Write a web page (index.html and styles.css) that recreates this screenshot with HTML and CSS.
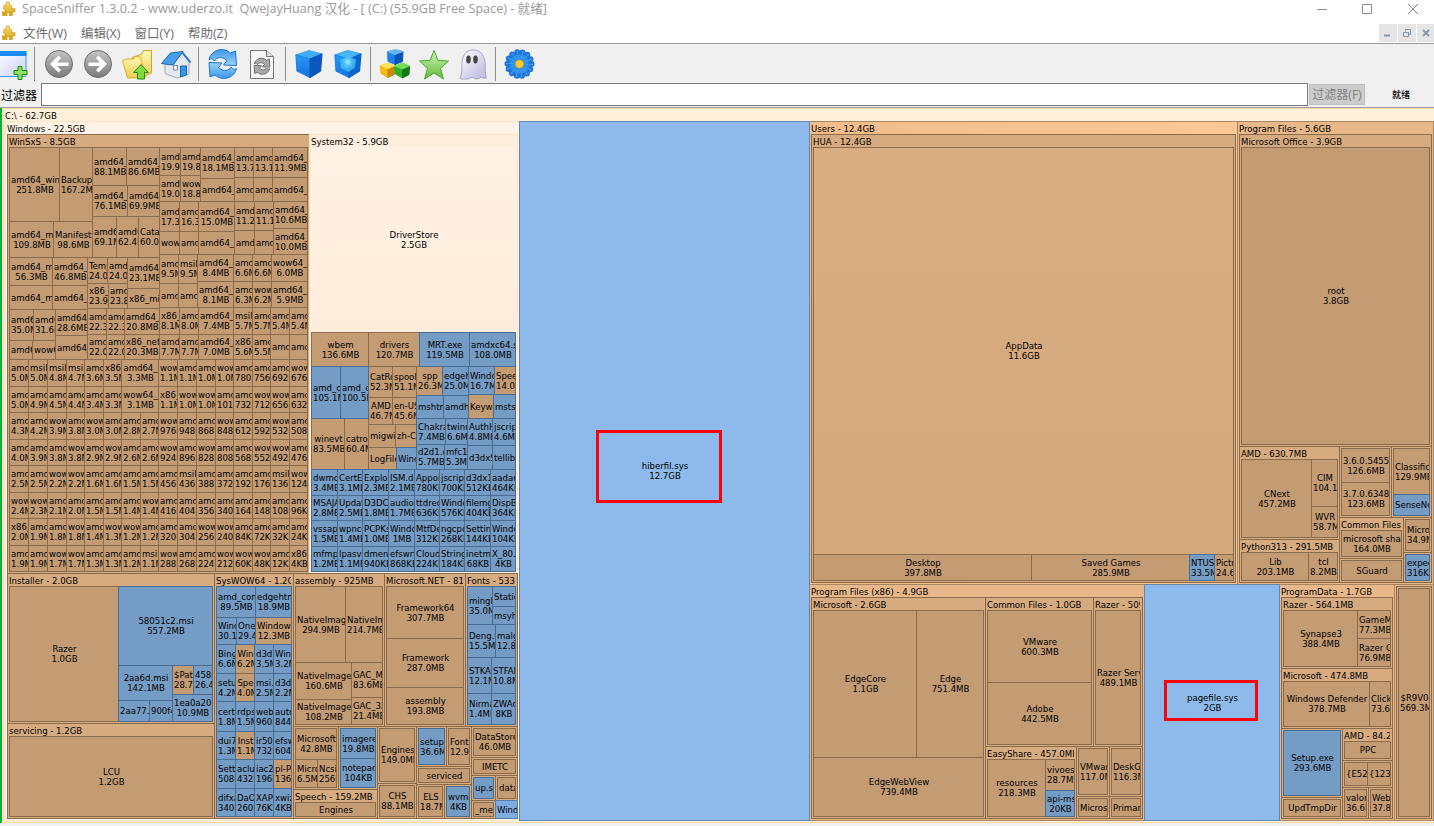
FILE: index.html
```html
<!DOCTYPE html>
<html lang="zh-CN">
<head>
<meta charset="utf-8">
<title>SpaceSniffer</title>
<link rel="stylesheet" href="styles.css">
</head>
<body>
<svg class="defs" width="0" height="0" aria-hidden="true">
  <defs>
    <linearGradient id="gGold" x1="0" y1="0" x2="0" y2="1"><stop offset="0" stop-color="#fdeb7c"/><stop offset="1" stop-color="#d59a0c"/></linearGradient>
    <linearGradient id="gGray" x1="0" y1="0" x2="0" y2="1"><stop offset="0" stop-color="#c4c4c4"/><stop offset="1" stop-color="#7b7b7b"/></linearGradient>
    <linearGradient id="gFold" x1="0" y1="0" x2="0" y2="1"><stop offset="0" stop-color="#fff8b4"/><stop offset="1" stop-color="#f1cd4e"/></linearGradient>
    <linearGradient id="gBlue" x1="0" y1="0" x2="0" y2="1"><stop offset="0" stop-color="#3d97ea"/><stop offset="1" stop-color="#9cd3fb"/></linearGradient>
    <linearGradient id="gCube" x1="0" y1="0" x2="0" y2="1"><stop offset="0" stop-color="#2b98f5"/><stop offset="1" stop-color="#0f70dc"/></linearGradient>
    <linearGradient id="gGreen" x1="0" y1="0" x2="0" y2="1"><stop offset="0" stop-color="#d2f3bc"/><stop offset="1" stop-color="#62bc35"/></linearGradient>
    <linearGradient id="gGhost" x1="0" y1="0" x2="1" y2="1"><stop offset="0" stop-color="#ffffff"/><stop offset="1" stop-color="#b9b4dd"/></linearGradient>
    <linearGradient id="gWin" x1="0" y1="0" x2="1" y2="1"><stop offset="0" stop-color="#ffffff"/><stop offset="1" stop-color="#ccd2f4"/></linearGradient>
    <radialGradient id="gGlow"><stop offset="0" stop-color="#a8f4ff"/><stop offset="1" stop-color="#38b4f8" stop-opacity="0"/></radialGradient>
    <g id="puzzle"><path d="M2.500 4.500H4.800C4 2.200 5 .8 6.400.8s2.200 1.500 1.500 3.700H10v2.700h3v3h-2.500v3.300H7.800c.5-1.700 0-2.800-1-2.800s-1.700 1-1.100 2.800H1.500V10c1.400.4 2.500-.1 2.500-1.200S3.500 7.200 2.500 7.400Z" fill="url(#gGold)" stroke="#c9920f" stroke-width=".7"/></g>
    <path id="swirl" d="M-13.500-4C-12-12-1-18 8-10.500L13-12.500 14 2 1 1.500 4.500-3C-1-8-6-6-8-2.500-10-5-11-5-13.500-4Z"/>
  </defs>
</svg>
<div class="app">
  <header class="titlebar">
    <svg class="logo" viewBox="0 0 14 14"><use href="#puzzle"/></svg>
    <span class="caption">SpaceSniffer 1.3.0.2 - www.uderzo.it&nbsp; QwejayHuang 汉化 - [ (C:) (55.9GB Free Space) - 就绪]</span>
    <svg class="winctl" viewBox="0 0 104 12" fill="none" stroke="#8a8a8a"><path d="M0 7.500H10M45.500 2.500h9v9h-9zM91 2l10 10M101 2 91 12"/></svg>
  </header>
  <nav class="menubar">
    <svg class="logo" viewBox="0 0 14 14"><use href="#puzzle"/></svg>
    <span>文件(W)</span><span>编辑(X)</span><span>窗口(Y)</span><span>帮助(Z)</span>
    <div class="mdi">
      <i><svg viewBox="0 0 18 18"><path d="M5 11.500h6" stroke="#8798ac" stroke-width="2"/></svg></i>
      <i><svg viewBox="0 0 18 18" fill="none" stroke="#8798ac"><path d="M7.500 7.500V5.500h5v5h-2M7 5.500h6M5.500 8.500h5v4h-5zM5 8.500h6"/></svg></i>
      <i><svg viewBox="0 0 18 18"><path d="m6 6 6 6m0-6-6 6" stroke="#8798ac" stroke-width="2"/></svg></i>
    </div>
  </nav>
  <div class="toolbar">
    <svg class="tools" viewBox="0 0 545 38">
      <rect x="-4" y="6.500" width="30" height="25" rx="1" fill="url(#gWin)" stroke="#3a96e6"/><path d="M-4 6h30.500v5H-4z" fill="#1c8cf0"/>
      <path d="M18 21.500h4v4h5v4h-5v5h-4v-5h-4v-4h4z" fill="#8fe05a" stroke="#198a14"/>
      <path d="M34.500 2v34M198.500 2v34M285.500 2v34M370.500 2v34M495.500 2v34" stroke="#8d8d8d"/>
      <g stroke="#6c6c6c"><circle cx="59" cy="19" r="13.500" fill="url(#gGray)"/><circle cx="98" cy="19" r="13.500" fill="url(#gGray)"/></g>
      <path d="m50 19 8.500-8.500 2.500 2.500-4 4.500h11.500v3.500H57l4 4-2.500 2.500zM107 19l-8.500-8.500L96 13l4 4.500H88.500V21H100l-4 4 2.500 2.500z" fill="#fff"/>
      <path d="M132 12.500 142 9l1.500-3.500h8V28l-13 5z" fill="url(#gFold)" stroke="#d2a21c"/>
      <path d="m122.500 15.500 4-1.500h7l2-2.500 5 .5 5 20.500-18 .5z" fill="url(#gFold)" stroke="#d9ae2c" stroke-linejoin="round"/>
      <path d="m141 19.500 7.500 8h-4v6.500h-7v-6.500h-4z" fill="#7edb3d" stroke="#278a15"/>
      <path d="M165 19v9.500l12 4.500 12-4V17l-7-9-9 11z" fill="#e4e9f0" stroke="#9fa9b5"/>
      <path d="m161.500 18.500 9-10.500L183 6.500 173 20z" fill="#4a9de8" stroke="#1b66b0" stroke-linejoin="round"/>
      <path d="m182.500 7.500 8 10" stroke="#2a79c8" stroke-width="2"/>
      <path d="M180.500 21h6v9l-6 2z" fill="#3a93e6" stroke="#1b66b0"/><path d="M173.500 20.500h4v4.500h-4z" fill="#fff" stroke="#75879a"/>
      <g fill="url(#gBlue)" stroke="#1e74cc" stroke-linejoin="round"><use href="#swirl" transform="translate(222.500 18.500)"/><use href="#swirl" transform="translate(223 19.500) rotate(180)"/></g>
      <path d="M250.500 5.500h16l7 6v22h-23z" fill="#f5f5f5" stroke="#777"/><path d="M266.500 5.500v6h7" fill="#ddd" stroke="#777"/>
      <g fill="#aaa" stroke="#666" stroke-width="1.600" stroke-linejoin="round"><use href="#swirl" transform="translate(262 21) scale(.56)"/><use href="#swirl" transform="translate(262 21.500) rotate(180) scale(.56)"/></g>
      <g stroke-width="1.200" stroke-linejoin="round"><path d="m296 10 13-4.500 13 3.500-12 5z" fill="#45acf9" stroke="#45acf9"/><path d="m296 10 14 4v18.500L297 26z" fill="url(#gCube)" stroke="#1a86ea"/><path d="m310 14 12-5-1.500 17-10.500 6.500z" fill="#0a58bd" stroke="#0a58bd"/></g>
      <g transform="translate(39 0)" stroke-width="1.200" stroke-linejoin="round"><path d="m296 10 13-4.500 13 3.500-12 5z" fill="#45b8f9" stroke="#3aa4f0"/><path d="m296 10 14 4v18.500L297 26z" fill="url(#gCube)" stroke="#1a86ea"/><path d="m310 14 12-5-1.500 17-10.500 6.500z" fill="#0a66cd" stroke="#0a60c8"/><path d="m301 15 8-3 8 2.500-1 8.500-6.500 4-7.500-4z" fill="#3fc4fa" opacity=".7" stroke="none"/><circle cx="309" cy="17" r="8" fill="url(#gGlow)" stroke="none"/></g>
      <g stroke-linejoin="round">
      <path d="m387.500 6.500 7.500 3v10l-7-3z" fill="#1f82ec" stroke="#1f82ec"/><path d="m395 9.500 8-3-.5 10-7.500 3z" fill="#0b53b4" stroke="#0b53b4"/><path d="m387.500 6.500 8-2 7.500 2-8 3z" fill="#63b4f5" stroke="#63b4f5"/>
      <path d="m380.500 20.500 7.500 3v9l-7-4z" fill="#f6bd14" stroke="#f0b30c"/><path d="m388 23.500 7-3V29l-7 3.500z" fill="#c98a02" stroke="#c98a02"/><path d="m380.500 20.500 7.500-2.500 7 2.500-7 3z" fill="#ffe45a" stroke="#ffe04a"/>
      <path d="m394.500 21 8 3v9l-7-4z" fill="#2fae28" stroke="#2fae28"/><path d="m402.500 24 7-3-.5 8.500-6.500 3.500z" fill="#0f7a12" stroke="#0f7a12"/><path d="m394.500 21 8-3 7 3-7 3z" fill="#74e05a" stroke="#6cd652"/>
      <path d="m434 5.500 4 10 10.500.5-8 7.500 3 10.500-9.500-6-9.500 6 3-10.500-8-7.500 10.500-.5z" fill="url(#gGreen)" stroke="#4ea52d"/></g>
      <path d="M460 33.500c2.500-5 1.500-11 2-16C462.500 9 467 5 473 5c7 0 11 4 12 12 .6 5-.5 11 1.500 16-2 1-3.500-.5-5-.5s-3 1.500-5 1.500-3-1.500-4.500-1.500-3 1.500-5 1.500-5 .5-7-.5z" fill="url(#gGhost)" stroke="#aaa5cf"/><ellipse cx="468.500" cy="14.500" rx="2.300" ry="4" fill="#444"/><ellipse cx="475.500" cy="14.500" rx="2.300" ry="4" fill="#444"/>
      <circle cx="519.500" cy="19" r="12" fill="#2f8fee" stroke="#1d78da" stroke-width="6" stroke-linecap="round" stroke-dasharray="0 5.385"/><circle cx="519.500" cy="19" r="9.500" fill="none" stroke="#5aaaf6" stroke-width="8" stroke-dasharray=".6 3.663"/><circle cx="519.500" cy="19" r="4" fill="#ffd22a" stroke="#e8a210" stroke-width=".8"/>
    </svg>
  </div>
  <div class="filter">
    <label>过滤器</label><div class="field"></div><button disabled>过滤器(F)</button><span>就绪</span>
  </div>
  <main class="canvas"></main>
</div>
<div class="mark mark-hiber"></div>
<div class="mark mark-page"></div>
<script src="treemap.js"></script>
</body>
</html>
```
FILE: styles.css
```css
* { box-sizing: border-box; }
body { margin: 0; width: 1434px; height: 826px; overflow: hidden; background: #f0f0f0; }
.defs { position: absolute; }
.app { display: flex; flex-direction: column; height: 826px; font-family: "Noto Sans", "Noto Sans CJK SC", sans-serif; }
.titlebar { display: flex; align-items: center; flex: 0 0 21px; background: #fff; padding: 0 13px 5px 1px; }
.logo { width: 15px; height: 15px; flex: none; }
.caption { margin-left: 6px; font: 12.64px "Open Sans", "Noto Sans CJK SC", sans-serif; line-height: 16px; color: #999; white-space: pre; }
.winctl { width: 104px; height: 12px; margin-left: auto; }
.menubar { display: flex; align-items: center; flex: 0 0 22px; background: #fff; padding-left: 1px; font: 12.500px "Open Sans", "Noto Sans CJK SC", sans-serif; color: #6b6b6b; }
.menubar span { margin-left: 7px; margin-right: 7px; white-space: nowrap; }
.mdi { display: flex; gap: 1px; margin-left: auto; padding-top: 2px; }
.mdi i { width: 18px; height: 18px; background: #e5e5e5; }
.mdi i:last-child { width: 17px; overflow: hidden; }
.mdi svg { display: block; width: 18px; height: 18px; }
.toolbar { flex: 0 0 40px; background: #f0f0f0; border-top: 1px solid #999; padding-top: 1px; }
.tools { display: block; width: 545px; height: 38px; }
.filter { display: flex; flex: 0 0 25px; align-items: flex-start; border-bottom: 1px solid #a0a0a0; font: 12px "Noto Sans CJK SC", sans-serif; }
.filter label { width: 41px; padding-left: 1px; line-height: 23px; color: #000; white-space: nowrap; }
.field { width: 1267px; height: 23px; background: #fff; border: 1px solid #7a7a7a; }
.filter button { width: 56px; height: 21px; margin: 1px 0 0 1px; padding: 0; border: 1px solid #bfbfbf; background: #ccc; color: #838383; font: 12px/18px "Open Sans", "Noto Sans CJK SC", sans-serif; white-space: nowrap; }
.filter span { margin-left: 27px; font-size: 9px; line-height: 23px; font-weight: 500; }
.canvas { display: flex; flex: 0 0 715px; width: 1434px; padding-left: 1px; border-left: 2px solid #0cb236; overflow: hidden; }

.row, .col { display: flex; flex: 1 1 0; min-width: 0; min-height: 0; }
.col { flex-direction: column; }
.leaf, .folder { min-width: 0; min-height: 0; margin: 0 -1px -1px 0; border: 1px solid #8a6b4c; flex: 1 1 0; }
.row.sized, .col.sized { flex: 0 0 calc(var(--s) * 1px); }
.leaf.sized, .folder.sized { flex: 0 0 calc(var(--s) * 1px + 1px); }
.leaf { display: flex; flex-direction: column; justify-content: center; padding: 0 0 0 1px; overflow: hidden; background: #c49c74; font: 9.500px/10px "DejaVu Sans Condensed", "DejaVu Sans", sans-serif; color: #000; }
.leaf span { display: block; flex: none; overflow: hidden; white-space: nowrap; text-align: center; height: 10px; }
.file { background: #759cc5; border-color: #4c6d92; position: relative; }
.bright { background: #8dbaea; border-color: #6187b0; }
.near { background: #7eace0; border-color: #5a80ad; }
.lit { background: linear-gradient(#fff2e4, #feecdb); border-color: #fff3e6; }
.wide { background: linear-gradient(#d8ad82, #d3a87c); }
.folder { display: flex; flex-direction: column; padding: 0 2px 2px 1px; background: #d6ab7f; }
.folder > h6 { flex: 0 0 12px; margin: 0; overflow: hidden; white-space: nowrap; font: 9.500px/13px "DejaVu Sans Condensed", "DejaVu Sans", sans-serif; color: #000; }
.folder.bare { padding-top: 1px; }
.canvas > .root { flex: 0 0 1433px; margin: 0; background: #fff0dc; border-color: #ffd9a4; }
.glow { background: #fff3e6; border-color: #fde4c6; }
.glow2 { background: #feeedd; border-color: #fde4c6; }
.top { background: #e8b88a; border-color: #a98560; }
.warm { background: linear-gradient(90deg, #f0bd8b, #fbc795); }

.mark { position: absolute; border: 3px solid #f80308; }
.mark-hiber { left: 596px; top: 430px; width: 126px; height: 73px; }
.mark-page { left: 1164px; top: 680px; width: 94px; height: 41px; }
```
FILE: treemap.js
```js
// Node builders. Stops are the border positions of a split; each size is the gap between two stops.
const el = (cls, kids = []) => {
  const n = document.createElement('div');
  n.className = cls;
  kids.forEach(k => n.append(k));
  return n;
};
const split = (dir, stops, kids) => {
  kids.forEach((k, i) => {
    if (i < kids.length - 1) {
      k.classList.add('sized');
      k.style.setProperty('--s', stops[i + 1] - stops[i]);
    }
  });
  return el(dir, kids);
};
const R = (stops, ...kids) => split('row', stops, kids);
const C = (stops, ...kids) => split('col', stops, kids);
// "name|size"; a leading "*" marks a file, otherwise a folder
const L = (s, cls = '') => {
  const file = s[0] === '*';
  const n = el('leaf ' + (file ? 'file ' : '') + cls);
  s.replace(/^\*/, '').split('|').forEach(t => {
    const e = document.createElement('span');
    e.textContent = t;
    n.append(e);
  });
  return n;
};
const F = (title, kid, cls = '') => {
  const n = el('folder ' + cls);
  const h = document.createElement('h6');
  h.textContent = title;
  n.append(h, kid);
  return n;
};
const U = (kid, cls = '') => el('folder bare ' + cls, [kid]);
const short = { a: 'amd64_', w: 'wow64_', x: 'x86_', m: 'msil_' };
// space separated leaves; "a5.0MB" expands to amd64_ / 5.0MB
const W = s => s.trim().split(/\s+/).map(t => {
  const m = /^([awxm])([\d.]+[KM]B)?$/.exec(t);
  return L(m ? short[m[1]] + (m[2] ? '|' + m[2] : '') : t.replace(/~/g, ' '));
});
const row = (stops, s) => R(stops, ...W(s));
const col = (stops, s) => C(stops, ...W(s));

const sxsTopLeft = R([9, 92, 159],
  C([147, 221, 257], row([9, 59, 92], 'amd64_win|251.8MB Backup|167.2MB'), row([9, 53, 92], 'amd64_m|109.8MB Manifests|98.6MB')),
  C([147, 185, 216, 257], row([92, 126, 159], 'a88.1MB a86.6MB'), row([92, 127, 159], 'a76.1MB a69.9MB'), row([92, 116, 138, 159], 'a69.1MB a62.4MB Catalogs|60.0MB')));
const sxsMidLeft = R([9, 87, 159],
  C([257, 285, 309, 359],
    row([9, 52, 87], 'amd64_m|56.3MB a46.8MB'),
    row([9, 52, 87], 'amd64_m a'),
    R([9, 55, 87],
      C([309, 340, 359], row([9, 33, 55], 'a35.0MB a31.6MB'), row([9, 32, 55], 'a w')),
      col([309, 335, 359], 'a28.6MB a'))),
  C([257, 308, 334, 359],
    R([87, 127, 159],
      C([257, 283, 308], row([87, 107, 127], 'Temp|24.0MB a24.0MB'), row([87, 108, 127], 'x23.9MB a23.8MB')),
      col([257, 288, 308], 'a23.1MB x86_mi')),
    row([87, 106, 124, 159], 'a22.3MB a22.3MB a20.8MB'),
    row([87, 106, 124, 159], 'a22.0MB a22.0MB x86_net|20.3MB')));
const sxsRight = C([147, 201, 254, 307, 359],
  R([159, 200, 234, 307],
    C([147, 175, 201], row([159, 180, 200], 'a19.9MB a19.8MB'), row([159, 180, 200], 'a19.0MB w18.8MB')),
    col([147, 178, 201], 'a18.1MB a'),
    C([147, 177, 201], row([234, 253, 272, 307], 'a13.7MB a13.1MB a11.9MB'), row([234, 253, 272, 307], 'a a a'))),
  R([159, 234, 273, 307],
    C([201, 231, 254], row([159, 179, 198, 234], 'a17.3MB a16.3MB a15.0MB'), row([159, 179, 198, 234], 'w a a')),
    C([201, 230, 254], row([234, 254, 273], 'a11.2MB a11.1MB'), row([234, 254, 273], 'a a')),
    col([201, 228, 254], 'a10.6MB a10.0MB')),
  R([159, 197, 233, 271, 307],
    C([254, 283, 307], row([159, 178, 197], 'a9.5MB m9.5MB'), row([159, 178, 197], 'a a')),
    col([254, 281, 307], 'a8.4MB a8.1MB'),
    C([254, 281, 307], row([233, 252, 271], 'a6.6MB a6.6MB'), row([233, 252, 271], 'a6.3MB w6.2MB')),
    col([254, 281, 307], 'w6.0MB a5.9MB')),
  C([307, 334, 359],
    row([159, 179, 198, 233, 252, 270, 289, 307], 'x8.1MB a8.0MB a7.4MB m5.7MB a5.7MB a5.4MB a5.4MB'),
    row([159, 179, 198, 233, 252, 270, 289, 307], 'a7.7MB a7.7MB a7.0MB x5.6MB a5.5MB a a')));
const c16 = [9, 28, 47, 66, 84, 103, 121, 140, 158, 177, 196, 215, 233, 252, 270, 289, 307];
const c15 = c16.filter(v => v !== 140);
const winsxs = C([147, 359, 386, 412, 439, 465, 492, 518, 545, 571],
  R([9, 159, 307], C([147, 257, 359], sxsTopLeft, sxsMidLeft), sxsRight),
  row(c15, 'a5.0MB m5.0MB m4.8MB m4.7MB a3.6MB x3.5MB a3.3MB w1.1MB a1.1MB a1.0MB w1.0MB a780KB a756KB a692KB w676KB'),
  row(c15, 'a5.0MB a4.9MB a4.5MB a4.4MB a3.4MB a3.3MB w3.1MB x1.1MB w1.0MB w1.0MB a1016KB a732KB w712KB w656KB a632KB'),
  row(c16, 'a4.3MB a4.2MB w3.9MB a3.8MB w3.0MB a3.0MB a2.8MB a2.7MB w976KB a948KB a868KB w848KB a612KB a592KB w532KB a508KB'),
  row(c16, 'a4.0MB a3.9MB a3.8MB w3.8MB a2.9MB w2.9MB a2.6MB a2.6MB w924KB a896KB w828KB a808KB a568KB w552KB w492KB a476KB'),
  row(c16, 'a2.5MB a2.5MB w2.2MB w2.2MB a1.6MB a1.6MB a1.5MB a1.5MB a456KB m436KB a388KB a372KB a192KB a176KB m136KB w124KB'),
  row(c16, 'w2.4MB w2.3MB a2.1MB a2.0MB a1.5MB a1.5MB a1.4MB w1.4MB a416KB a404KB a356KB a340KB a164KB a148KB a108KB a96KB'),
  row(c16, 'x2.0MB a1.9MB a1.8MB w1.8MB a1.4MB w1.3MB w1.2MB a1.2MB a320KB a304KB w256KB w240KB a84KB a72KB a32KB a24KB'),
  row(c16, 'a1.9MB a1.9MB w1.7MB w1.7MB a1.3MB a1.3MB a1.2MB m1.1MB w288KB a268KB a224KB w212KB w60KB w48KB a12KB x4KB'));

const c8 = [311, 337, 362, 388, 414, 439, 464, 490, 515];
const system32 = C([147, 332, 366, 469, 495, 520, 546, 571],
  L('DriverStore|2.5GB', 'lit'),
  row([311, 368, 419, 469, 515], 'wbem|136.6MB drivers|120.7MB *MRT.exe|119.5MB *amdxc64.so|108.0MB'),
  R([311, 368, 416, 515],
    C([366, 418, 469], row([311, 340, 368], '*amd_comp|105.1MB *amd_comp|100.5MB'), row([311, 344, 368], 'winevt|83.5MB catroot|60.4MB')),
    C([366, 397, 424, 447, 469],
      row([368, 392, 416], 'CatRoot|52.3MB spool|51.1MB'), row([368, 392, 416], 'AMD|46.7MB en-US|45.6MB'),
      row([368, 395, 416], 'migwiz zh-CN'), row([368, 396, 416], 'LogFiles *Windows')),
    C([366, 418, 469],
      R([416, 468, 515],
        C([366, 395, 418], row([416, 442, 468], 'spp|26.3MB *edgehtml|25.0MB'), row([416, 443, 468], '*mshtml *amdhip')),
        C([366, 394, 418], row([468, 494, 515], '*Windows|16.7MB Speech|14.0MB'), row([468, 493, 515], 'Keyword *mstsc'))),
      R([416, 467, 515],
        C([418, 444, 469], row([416, 445, 467], '*Chakra|7.4MB *twinui|6.6MB'), row([416, 444, 467], '*d2d1.dll|5.7MB *mfc140|5.3MB')),
        C([418, 445, 469], row([467, 492, 515], '*AuthHost|4.8MB *jscript|4.6MB'), row([467, 492, 515], '*d3dxSc *tellib'))))),
  row(c8, '*dwmcore|3.4MB *CertEn|3.1MB *Explorer|2.3MB *ISM.dll|2.1MB *AppointX|780KB *jscript9|700KB *d3dx10|512KB *aadauth|464KB'),
  row(c8, '*MSAJAP|2.8MB *Update|2.5MB *D3DCom|1.8MB *audioeng|1.7MB *ttdrecord|636KB *Windows|576KB *filemgmt|404KB *DispBr|364KB'),
  row(c8, '*vssapi|1.5MB *wpncore|1.4MB *PCPKsp|1.0MB *Windows|1MB *MtfDecod|312KB *ngcpopk|268KB *Settings|144KB *Windows|104KB'),
  row(c8, '*mfmpeg|1.2MB *lpasvc|1.1MB *dmenroll|940KB *efswrt|868KB *CloudEx|224KB *StringFe|184KB *inetmib|68KB *X_80.dll|4KB'));

const installer = R([9, 118, 212], L('Razer|1.0GB'),
  C([586, 665, 721], L('*58051c2.msi|557.2MB'),
    R([118, 172, 212],
      C([665, 700, 721], L('*2aa6d.msi|142.1MB'), row([118, 149, 172], '*2aa77.msi *900f4')),
      C([665, 694, 721], row([172, 193, 212], '$Patch|28.7MB *4586f|26.4MB'), L('*1ea0a20.msi|10.9MB')))));
const c4 = [216, 235, 254, 273, 291];
const syswow = C([586, 617, 644, 673, 701, 731, 759, 788, 816],
  row([216, 255, 291], '*amd_comp|89.5MB *edgehtml|18.9MB'),
  row([216, 236, 255, 291], '*Windows|30.1MB *OneDr|29.4MB Windows|12.3MB'),
  row(c4, '*BingM|6.6MB Win|6.2MB *d3d12|3.5MB *Win|3.2MB'),
  row(c4, '*setup|4.2MB Spe|4.0MB *msi.dll|2.5MB *d3d|2.2MB'),
  row(c4, '*certm|1.8MB *rdps|1.5MB *webi|960KB *autor|844KB'),
  row(c4, '*dui70|1.3MB Inst|1.1MB *ir50_|732KB *efswr|604KB'),
  row(c4, '*Setti|508KB *aclui|432KB *iac25|196KB pl-PL|136KB'),
  row(c4, '*difxa|340KB *DaOt|260KB *XAPO|76KB *xwiz|4KB'));
const assembly = C([586, 662, 724],
  row([295, 345, 382], 'NativeImages|294.9MB NativeImages|214.7MB'),
  R([295, 351, 382], col([662, 699, 724], 'NativeImages|160.6MB NativeImages|108.2MB'), col([662, 697, 724], 'GAC_MSIL|83.6MB GAC_32|21.4MB')));
const fonts = C([586, 624, 657, 693, 724],
  R([467, 492, 515], L('*mingliu|35.0MB'), col([586, 606, 624], '*Static *msyh')),
  row([467, 495, 515], '*Deng.ttf|15.5MB *malgun|12.8MB'),
  row([467, 491, 515], '*STKAITI|12.1MB *STFAN|10.8MB'),
  row([467, 491, 515], '*Nirmala|1.4MB *ZWAdo|8KB'));
const smallDirs = R([293, 377, 416, 471, 517],
  C([726, 789, 818],
    R([293, 338, 377],
      U(C([728, 759, 787], L("Microsoft'|42.8MB"), row([295, 317, 336], 'Micro|6.5MB Ncsi|256KB'))),
      U(col([728, 758, 787], '*imageres|19.8MB *notepad|104KB'))),
    F('Speech - 159.2MB', L('Engines'))),
  C([726, 783, 818], U(L('Engines|149.0MB')), U(L('CHS|88.1MB'))),
  C([726, 766, 784, 818],
    R([416, 446, 471], U(L('*setupapi|36.6MB')), U(L('Fonts|12.9MB'))),
    U(L('serviced')),
    R([416, 444, 471], U(L('ELS|18.7MB')), U(L('*wvmic|4KB')))),
  C([726, 757, 775, 800, 818],
    U(L('DataStore|46.0MB')), U(L('IMETC')),
    R([471, 495, 517], U(L('*up.sys')), U(L('data:'))),
    R([471, 495, 517], U(L('_me')), L('*Windows', 'near'))));
const windows = C([134, 573, 818],
  R([7, 309, 517], F('WinSxS - 8.5GB', winsxs), F('System32 - 5.9GB', system32, 'glow2')),
  R([7, 214, 293, 517],
    C([573, 723, 818], F('Installer - 2.0GB', installer), F('servicing - 1.2GB', L('LCU|1.2GB'))),
    F('SysWOW64 - 1.2GB', syswow),
    C([573, 726, 818],
      R([293, 384, 465, 517],
        F('assembly - 925MB', assembly),
        F('Microsoft.NET - 812MB', col([586, 638, 687, 724], 'Framework64|307.7MB Framework|287.0MB assembly|193.8MB')),
        F('Fonts - 533.8MB', fonts)),
      smallDirs)));

const users = F('HUA - 12.4GB', C([147, 554, 580], L('AppData|11.6GB', 'wide'),
  row([813, 1031, 1189, 1214, 1233], 'Desktop|397.8MB Saved~Games|285.9MB *NTUSER|33.5MB Pictures|24.6MB')));
const progs = C([134, 446, 582],
  F('Microsoft Office - 3.9GB', L('root|3.8GB')),
  R([1239, 1339, 1431],
    C([446, 539, 582],
      F('AMD - 630.7MB', R([1241, 1311, 1337], L('CNext|457.2MB'), col([459, 506, 537], 'CIM|104.1MB WVR|58.7MB'))),
      F('Python313 - 291.5MB', row([1241, 1308, 1337], 'Lib|203.1MB tcl|8.2MB'))),
    C([446, 517, 582],
      R([1339, 1391, 1431], U(col([448, 482, 515], '3.6.0.5455|126.6MB 3.7.0.63487|123.6MB')), U(col([448, 494, 515], 'Classific|129.9MB *SenseNdr'))),
      R([1339, 1403, 1431],
        C([517, 558, 582], F('Common Files', L('microsoft shared|164.0MB')), U(L('SGuard'))),
        C([517, 552, 582], U(L('Micro|34.9MB')), U(L('*expected|316KB')))))));
const x86 = R([811, 985, 1142],
  F('Microsoft - 2.6GB', C([610, 757, 816], row([813, 916, 983], 'EdgeCore|1.1GB Edge|751.4MB'), L('EdgeWebView|739.4MB'))),
  C([597, 746, 818],
    R([985, 1093, 1142],
      F('Common Files - 1.0GB', col([610, 682, 744], 'VMware|600.3MB Adobe|442.5MB')),
      F('Razer - 509.7MB', L('Razer Services|489.1MB'))),
    R([985, 1076, 1109, 1142],
      F('EasyShare - 457.0MB', R([987, 1045, 1074], L('resources|218.3MB'), col([759, 790, 816], 'vivoes|28.7MB *api-ms|20KB'))),
      C([746, 796, 818], U(L('VMware|117.0MB')), U(L('Microsoft'))),
      C([746, 796, 818], U(L('DeskGo|116.3MB')), U(L('Primary'))))));
const pdata = C([597, 668, 728, 818],
  F('Razer - 564.1MB', R([1283, 1357, 1390], L('Synapse3|388.4MB'), col([610, 638, 666], 'GameM|77.3MB Razer~C|76.9MB'))),
  F('Microsoft - 474.8MB', row([1283, 1369, 1390], 'Windows~Defender|378.7MB ClickT|73.6MB')),
  R([1281, 1342, 1392],
    C([728, 797, 818], U(L('*Setup.exe|293.6MB')), U(L('UpdTmpDir'))),
    C([728, 760, 787, 818],
      F('AMD - 84.2MB', L('PPC')),
      U(row([1344, 1367, 1390], '{E528 {1234')),
      R([1342, 1368, 1392], U(L('valor|36.6MB')), U(L('WebC|37.8MB'))))));

document.querySelector('.canvas').append(F('C:\\ - 62.7GB',
  R([5, 519, 809, 1433],
    F('Windows - 22.5GB', windows, 'glow'),
    L('*hiberfil.sys|12.7GB', 'bright'),
    C([121, 584, 820],
      R([809, 1237, 1433], F('Users - 12.4GB', users, 'top warm'), F('Program Files - 5.6GB', progs, 'top')),
      R([809, 1144, 1279, 1394, 1433],
        F('Program Files (x86) - 4.9GB', x86, 'top'),
        L('*pagefile.sys|2GB', 'bright'),
        F('ProgramData - 1.7GB', pdata, 'top'),
        U(U(L('$R9V0|569.3MB')), 'top')))), 'root'));
```
